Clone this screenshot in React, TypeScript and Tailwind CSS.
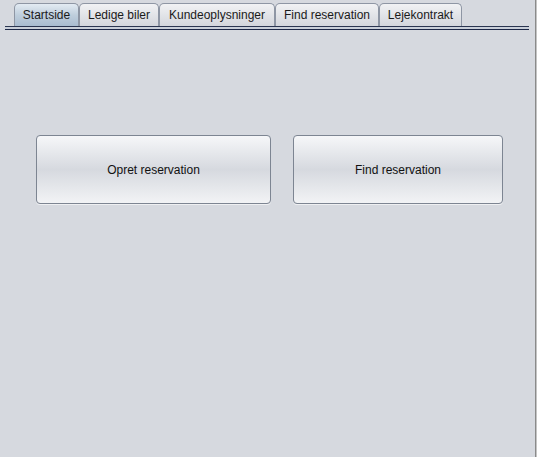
import React from 'react'

const tabs = [
  { label: 'Startside', w: 'w-[65px]', selected: true },
  { label: 'Ledige biler', w: 'w-[80px]' },
  { label: 'Kundeoplysninger', w: 'w-[116px]' },
  { label: 'Find reservation', w: 'w-[104px]' },
  { label: 'Lejekontrakt', w: 'w-[83px]' },
]

const Tab = ({ label, w, selected }: { label: string; w: string; selected?: boolean }) => (
  <div
    className={`${w} h-[23px] flex items-center justify-center rounded-t-[5px] border border-b-0 border-[#8e96a4] text-[12px] text-[#1a1a1a] ${
      selected
        ? 'bg-gradient-to-b from-[#e3ebf3] via-[#bfcedc] to-[#a9bcd0]'
        : 'bg-gradient-to-b from-[#f1f2f4] via-[#e2e4e8] to-[#d3d6dc]'
    }`}
  >
    {label}
  </div>
)

const BigButton = ({ label, w }: { label: string; w: string }) => (
  <button
    className={`${w} h-[69px] rounded-[4px] border border-[#7d8592] bg-gradient-to-b from-[#f6f7f9] via-[#d6d9df] to-[#f2f3f5] text-[12px] text-[#111] shadow-[0_1px_0_rgba(255,255,255,0.6)]`}
  >
    {label}
  </button>
)

export default function App() {
  return (
    <div
      className="w-[537px] h-[457px] flex bg-[#d6d9df] overflow-hidden"
      style={{ fontFamily: '"Liberation Sans", Arial, sans-serif' }}
    >
      <div className="flex-1 flex flex-col">
        <div className="pt-[3px] pl-[14px] flex">
          {tabs.map((t) => (
            <Tab key={t.label} {...t} />
          ))}
        </div>
        <div className="ml-[5px] mr-[6px] flex flex-col">
          <div className="h-px bg-[#2a3550]" />
          <div className="h-[2px] bg-[#c9cfd9]" />
          <div className="h-px bg-[#1c2746]" />
        </div>
        <div className="mt-[105px] pl-[36px] flex gap-[22px]">
          <BigButton label="Opret reservation" w="w-[235px]" />
          <BigButton label="Find reservation" w="w-[210px]" />
        </div>
      </div>
      <div className="w-px bg-[#8a8a8a]" />
      <div className="w-px bg-[#c4c4c4]" />
    </div>
  )
}
